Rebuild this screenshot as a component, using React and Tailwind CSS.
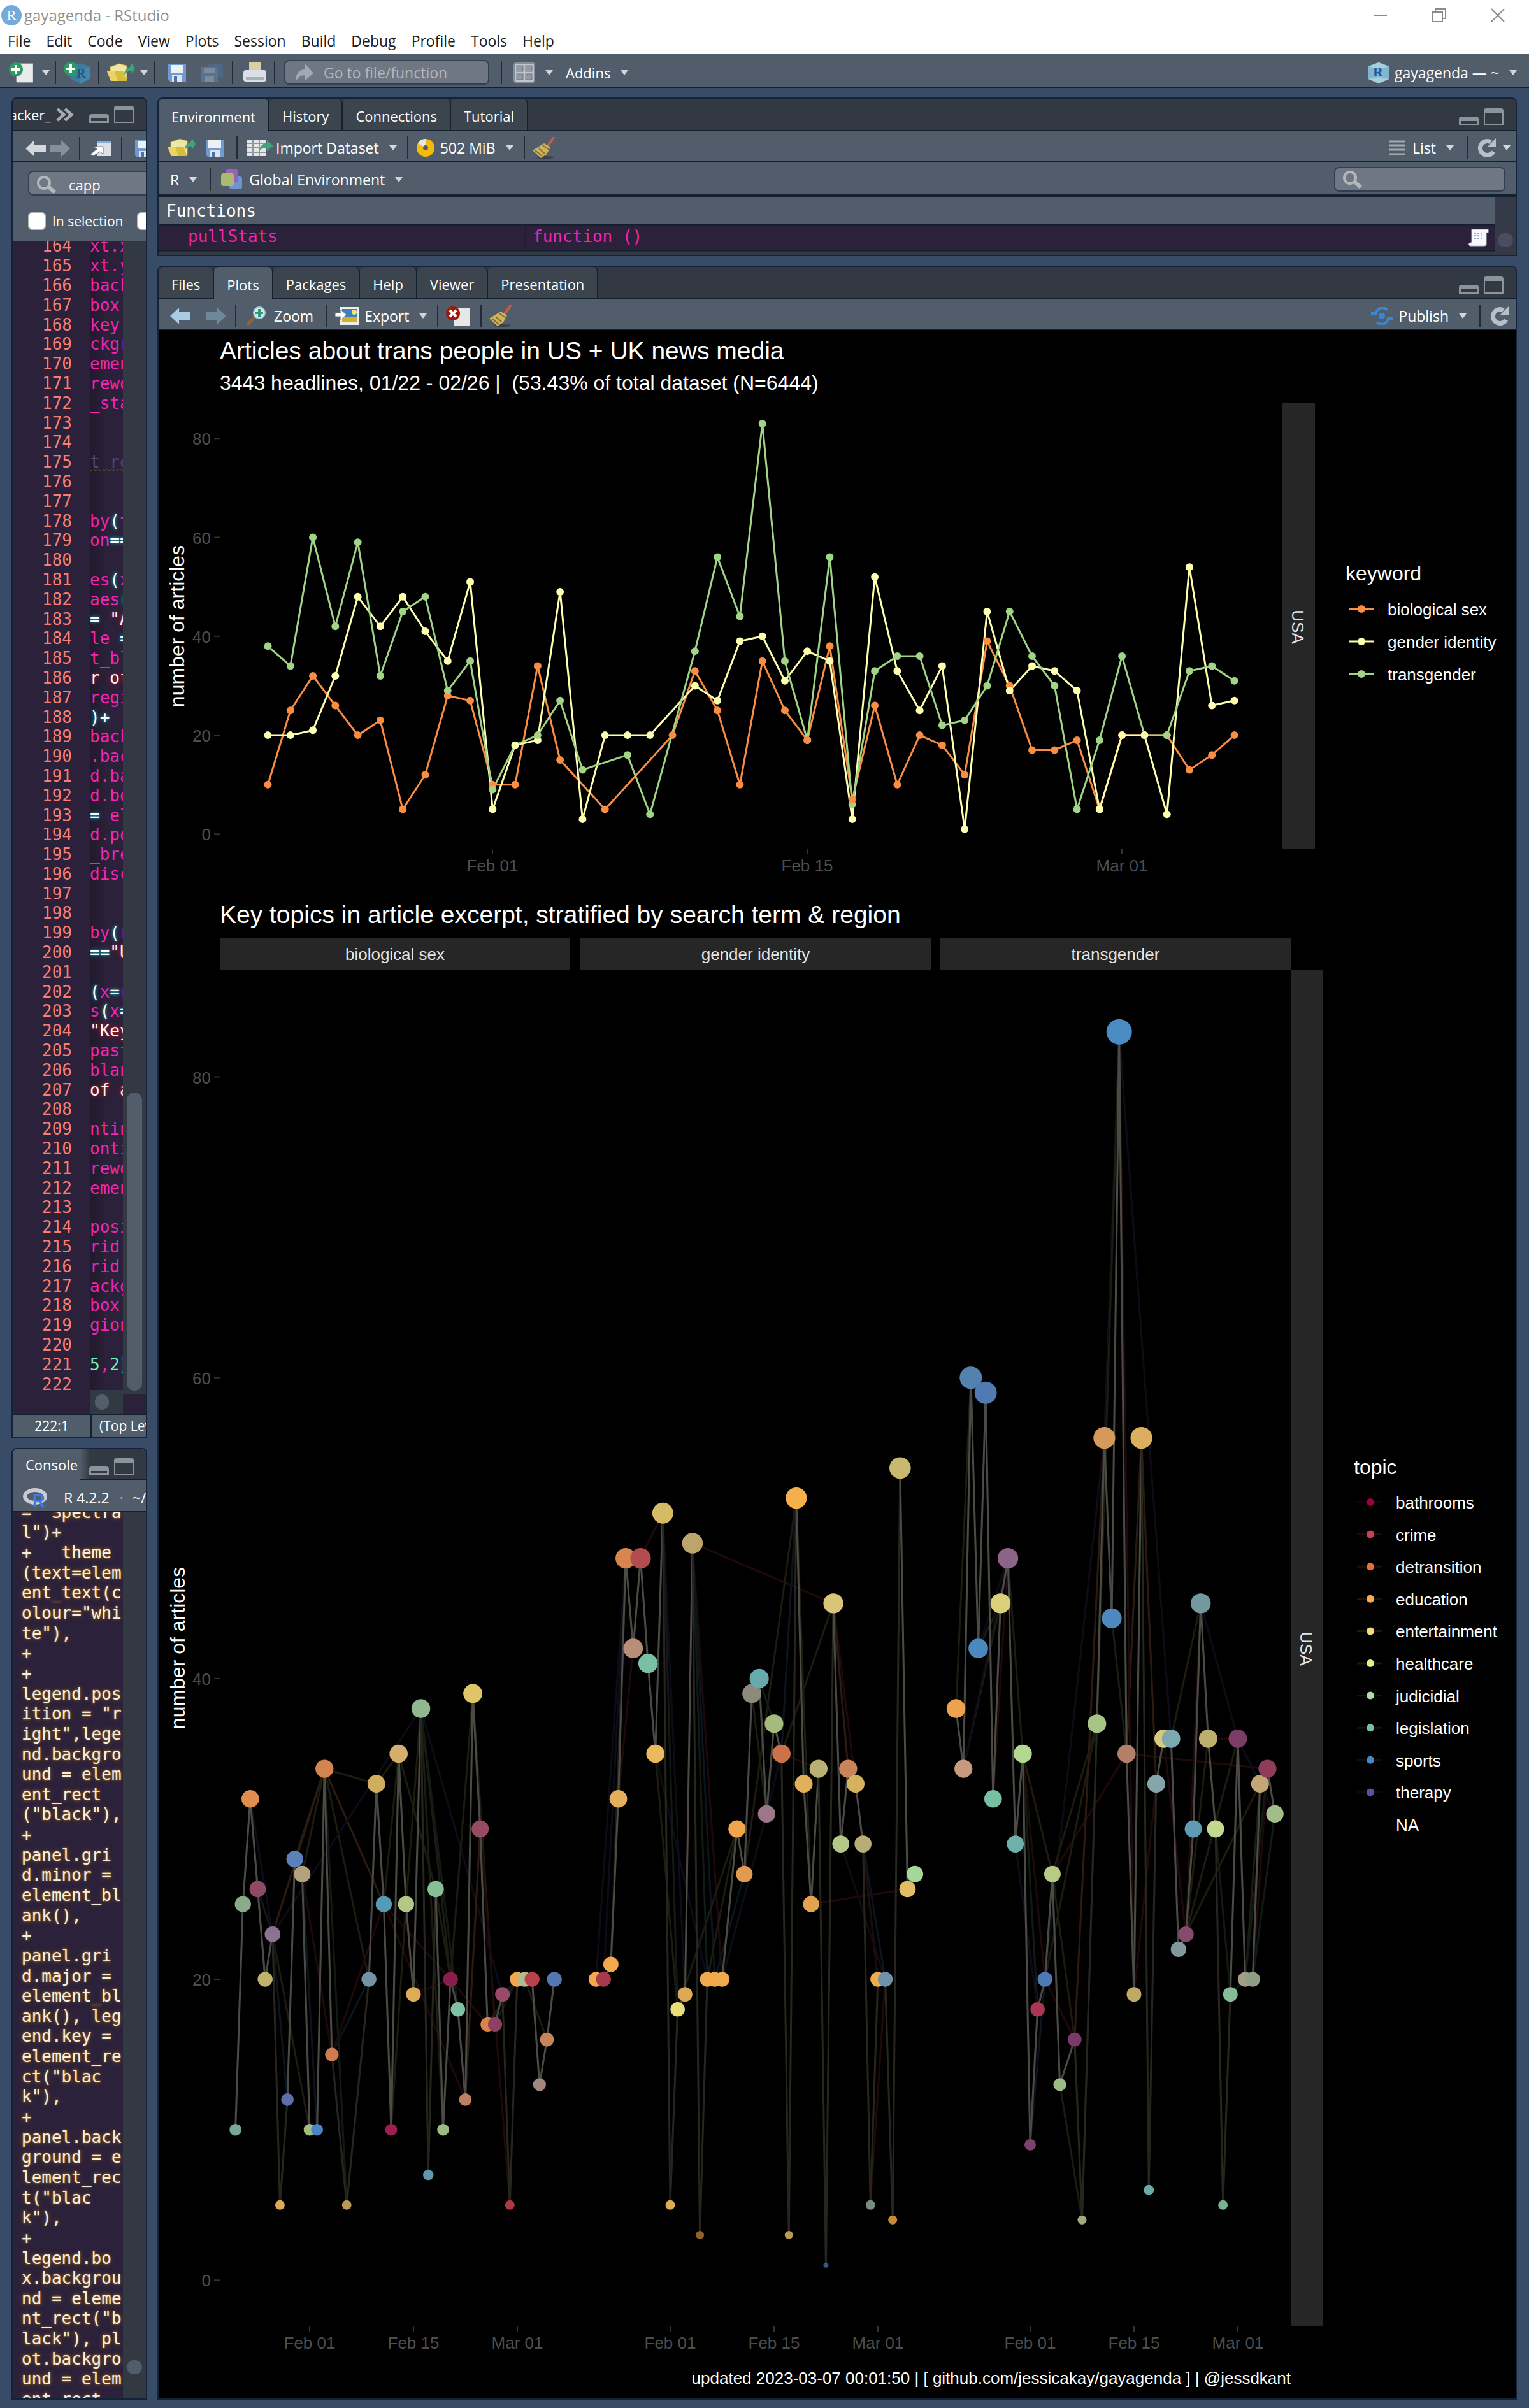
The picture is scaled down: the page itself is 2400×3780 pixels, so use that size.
import { clsx } from "clsx";

/* ---------- data ---------- */

const MENUS = ["File", "Edit", "Code", "View", "Plots", "Session", "Build", "Debug", "Profile", "Tools", "Help"];

// visible slice of the editor; "str" lines sit inside a string, "com" lines are comments
const CODE = [
  ["xt.x"], ["xt.y"], ["back"], ["box."], ["key."], ["ckgr"], ["emen"], ["rewo"], ["_sta"], [""], [""],
  ["t re", "com"], [""], [""], ["by(t"], ["on=="], [""], ["es(x"], ["aes("], ['= "A'], ["le ="], ["t_bl"],
  ["r of", "str"], ["regi"], [")+"], ["back"], [".bac"], ["d.ba"], ["d.bo"], ["= el"], ["d.po"], ["_bre"],
  ["disc"], [""], [""], ["by(r"], ['=="U'], [""], ["(x=r"], ["s(x="], ['"Key', "str"], ["past"], ["blan"],
  ["of a", "str"], [""], ["ntin"], ["onti"], ["rewo"], ["emen"], [""], ["posi"], ["rid."], ["rid."], ["ackg"],
  ["box."], ["gion"], [""], ["5,2)"], [""],
];

const CONSOLE = [
  '= "Spectra', 'l")+', "+   theme", "(text=elem", "ent_text(c", 'olour="whi', 'te"),', "+", "+", "legend.pos",
  'ition = "r', 'ight",lege', "nd.backgro", "und = elem", "ent_rect", '("black"),', "+", "panel.gri", "d.minor =",
  "element_bl", "ank(),", "+", "panel.gri", "d.major =", "element_bl", "ank(), leg", "end.key =", "element_re",
  'ct("blac', 'k"),', "+", "panel.back", "ground = e", "lement_rec", 't("blac', 'k"),', "+", "legend.bo",
  "x.backgrou", "nd = eleme", 'nt_rect("b', 'lack"), pl', "ot.backgro", "und = elem", "ent_rect",
];

const _ = null;
// one value per day, starting Jan 22
const BIO = [10, 25, 32, 26, 20, 23, 5, 12, 28, 27, 10, 10, 34, 15, _, 5, _, _, 20, 33, 25, 10, 35, 25, 19, 38, 7, 26, 10, 20, 18, 12, 39, 30, 17, 17, 19, 5, 20, 20, 20, 13, 16, 20];
const GENDER = [20, 20, 21, 32, 48, 42, 48, 41, 35, 51, 5, 18, 19, 49, 3, 20, 20, 20, _, 30, 27, 39, 40, 31, 37, 35, 3, 52, 33, 25, 34, 1, 45, 29, 34, 33, 29, 5, 20, 20, 4, 54, 26, 27];
const TRANS = [38, 34, 60, 42, 59, 32, 45, 48, 29, 35, 9, 18, 20, 27, 13, _, 16, 4, _, 37, 56, 44, 83, 35, 19, 56, 6, 33, 36, 36, 22, 23, 30, 45, 36, 30, 5, 19, 36, 20, 20, 33, 34, 31];

const SERIES = [
  { name: "biological sex", color: "#f98d43", values: BIO },
  { name: "gender identity", color: "#ffffb0", values: GENDER },
  { name: "transgender", color: "#a1d486", values: TRANS },
];

// series whose dot is painted last on days where dots overlap
const ON_TOP = { 8: 2, 10: 2, 12: 2, 24: 0, 26: 0, 40: 2 };

const BIO_COLORS = "74a99b 8ba98b e08e4f 8f4a68 c0b16c 8b7393 dba95a 5c6fa9 5a82b8 b5a27d a1bb80 4a86c6 d38450 cf7a4f - b89757 - - 7592a5 cfae60 559bb7 9c1f50 d5ae6c b3c787 dfab55 90b890 6298ae 86be95 9cbb84 8a1c4e 7fc0a2 bd8162 dfc468 974a62 dc834b 8d4063 9a4a66 a93a44 f3a94b b4ba90 b9414c a2877f c7835c 5377b2".split(" ");
const GENDER_COLORS = "f3a94b a8384c f3a94b e2b05a d78650 b98d78 b34d4d 7bc0a4 ebba5e d7bb64 e0ab55 e9e078 dea957 bda36c 8f622b f1a94d f3a94b f1a94d - f1a64c e09b51 8b8a7c 67aaae 9d7789 a5bb7e cc724a b79a54 f4b04a e0b05a e5a34f bbb073 2c5e8d d9c578 b5c787 c98559 d5b260 b8ad77 788c80 efac4f 6f91aa c98a35 c8b96f e2bd63 a6d79a".split(" ");
const TRANS_COLORS = "efa24c c79a80 5482ae 4a88c0 527ab2 78bfa3 d9d07c 8b6488 6fb0aa b5d890 7d426c ab3552 4d7ab4 b7cb86 9bbd84 - 7a3a6c a7a87c - a7c484 d6995c 4e89bd 4a8bc4 b47f68 bfa964 dcae60 67ada6 84a6aa d9c97c 7ca8b0 81979a 874a6b 5f9cb3 74989f bdae6e c2da8d 79b193 84bd98 7d3c66 a39d85 8f9e85 c2a673 913b5a a2bd8a".split(" ");

const INK = { o: "#1c1c10", r: "#1f0a0b", p: "#0e0c18", b: "#0a151f", g: "#101b16", n: "#2c1b11" };

// faint per-topic links between days: [from, to, ink]
const BIO_LINKS = [
  [12, 19, "o"], [5, 10, "o"], [3, 5, "g"], [2, 5, "p"], [12, 20, "n"], [12, 18, "o"], [5, 12, "n"], [9, 12, "o"], [8, 12, "n"],
  [5, 25, "p"], [25, 36, "p"], [22, 27, "o"], [19, 22, "o"], [20, 29, "r"], [29, 34, "r"], [20, 31, "r"], [12, 15, "g"],
  [9, 13, "r"], [13, 18, "b"], [13, 20, "r"], [25, 28, "o"], [25, 29, "o"], [25, 30, "g"], [32, 35, "o"], [33, 37, "r"],
  [35, 38, "g"], [36, 38, "b"], [27, 29, "o"], [39, 42, "o"], [5, 7, "b"], [9, 11, "b"], [20, 22, "o"], [23, 25, "o"],
  [29, 32, "o"], [31, 33, "n"], [34, 38, "o"], [2, 4, "g"], [24, 29, "r"], [21, 23, "o"],
];
const GENDER_LINKS = [
  [6, 9, "r"], [13, 32, "r"], [25, 27, "b"], [20, 27, "o"], [25, 32, "o"], [32, 35, "r"], [32, 34, "n"], [13, 15, "g"],
  [13, 17, "r"], [8, 15, "p"], [8, 11, "o"], [9, 12, "p"], [13, 16, "b"], [11, 19, "o"], [15, 19, "o"], [17, 23, "p"], [16, 20, "b"],
  [29, 42, "r"], [33, 39, "p"], [36, 39, "b"], [36, 38, "o"], [1, 4, "p"], [2, 4, "o"], [3, 5, "r"], [23, 25, "p"], [25, 30, "r"],
  [27, 29, "o"], [35, 38, "r"], [37, 39, "r"], [9, 11, "g"], [22, 24, "g"], [21, 23, "o"], [0, 4, "p"],
];
const TRANS_LINKS = [
  [0, 2, "o"], [1, 6, "o"], [3, 6, "o"], [1, 7, "p"], [3, 7, "p"], [7, 9, "o"], [9, 13, "o"], [9, 11, "g"], [9, 12, "r"],
  [8, 11, "p"], [12, 20, "p"], [20, 22, "p"], [22, 29, "p"], [12, 16, "r"], [14, 17, "o"], [16, 17, "b"], [13, 19, "o"],
  [13, 16, "o"], [13, 23, "r"], [23, 42, "r"], [24, 27, "r"], [21, 23, "o"], [25, 27, "n"], [23, 25, "n"], [19, 22, "o"],
  [29, 33, "o"], [33, 38, "p"], [31, 34, "o"], [31, 38, "o"], [31, 41, "o"], [34, 38, "r"], [38, 43, "p"], [35, 37, "g"],
  [39, 41, "o"], [39, 42, "g"], [40, 43, "g"], [40, 42, "r"], [22, 24, "r"], [28, 31, "r"], [31, 33, "r"], [17, 19, "g"],
  [5, 7, "r"], [10, 12, "b"], [12, 19, "o"], [16, 20, "n"], [37, 39, "g"],
];

const FACETS = [
  { name: "biological sex", x: 345, feb: 486, values: BIO, colors: BIO_COLORS, links: BIO_LINKS },
  { name: "gender identity", x: 911, feb: 1052, values: GENDER, colors: GENDER_COLORS, links: GENDER_LINKS },
  { name: "transgender", x: 1476, feb: 1617, values: TRANS, colors: TRANS_COLORS, links: TRANS_LINKS },
];

const TOPICS = [
  ["bathrooms", "#9e0142", "#1a0009"], ["crime", "#c8404b", "#1a0a0b"], ["detransition", "#e87030", "#231009"],
  ["education", "#f7ad4b", "#1d150a"], ["entertainment", "#f5dc78", "#1b190e"], ["healthcare", "#e8f08a", "#191a0e"],
  ["judicidial", "#abdda4", "#121811"], ["legislation", "#77bfa5", "#0c1612"], ["sports", "#4a86c0", "#08111a"],
  ["therapy", "#5e4fa2", "#0b0913"], ["NA", null, null],
];

/* ---------- icons ---------- */

const Icon = ({ w, h, className, children }) => (
  <svg width={w} height={h} viewBox={`0 0 ${w} ${h}`} className={clsx("shrink-0", className)} aria-hidden="true">
    {children}
  </svg>
);

const Caret = ({ className }) => (
  <Icon w={12} h={8} className={className}><path d="M0 0h12L6 8z" fill="#d3d6d9" /></Icon>
);

const Sep = ({ className }) => <span className={clsx("h-9 w-0.5 shrink-0 bg-[#222b35]", className)} />;

const PlusBadge = () => (
  <>
    <circle cx="11" cy="12" r="11" fill="#2d9a5f" />
    <path d="M11 5v14M4 12h14" stroke="#fff" strokeWidth="4" />
  </>
);

const NewFileIcon = (p) => (
  <Icon w={38} h={34} {...p}><path d="M12 3h26v29H12z" fill="#e9eaea" stroke="#bfc4c8" /><PlusBadge /></Icon>
);

const NewProjectIcon = (p) => (
  <Icon w={42} h={36} {...p}>
    <path d="M26 3l16 6v18l-16 9-16-9V9z" fill="#3b7ba0" />
    <path d="M26 14l16-5v18l-16 9z" fill="#4587aa" />
    <text x="20" y="26" fontSize="20" fontFamily="Liberation Serif, serif" fontWeight="bold" fill="#1f568b">R</text>
    <PlusBadge />
  </Icon>
);

const FolderIcon = (p) => (
  <Icon w={44} h={30} {...p}>
    <path d="M5 6l14-5 12 3v22H5z" fill="#f0e6a4" stroke="#b7a341" />
    <path d="M0 13h25l6 15H6z" fill="#d9bd3a" />
    <path d="M6 28L0 13h12l5 15z" fill="#ead468" />
    <path d="M31 13l8-12v0l5 8-5 8v-4c-6-1-10 2-12 6 0-8 4-13 12-13" fill="#3fa27a" />
  </Icon>
);

const SaveIcon = (p) => (
  <Icon w={28} h={28} {...p}>
    <path d="M0 1h28v27H3l-3-3z" fill="#6f9bd0" />
    <path d="M4 2h20v12H4z" fill="#eef1f4" />
    <path d="M6 18h16v10H6z" fill="#dfe4ea" />
    <path d="M9 20h5v8H9z" fill="#4a74a8" />
  </Icon>
);

const SaveAllIcon = (p) => (
  <Icon w={34} h={30} {...p}>
    <path d="M10 1h24v21H10z" fill="#4e6883" />
    <path d="M0 6h26v24H0z" fill="#567391" />
    <path d="M4 7h18v9H4zM6 21h14v8H6z" fill="#7b8b9b" />
  </Icon>
);

const PrintIcon = (p) => (
  <Icon w={36} h={32} {...p}>
    <path d="M9 0h18v16H9z" fill="#d9cfa4" />
    <rect y="12" width="36" height="18" rx="4" fill="#dcdfe6" />
    <path d="M4 23h28v4H4z" fill="#a9afbb" />
  </Icon>
);

const GotoIcon = (p) => (
  <Icon w={28} h={28} {...p}><path d="M0 28C0 15 6 9 15 9V0l13 15-13 11v-8C8 18 4 21 0 28z" fill="#a3a9b4" /></Icon>
);

const GridIcon = (p) => (
  <Icon w={34} h={32} {...p}>
    <rect x="1" y="1" width="32" height="30" rx="3" fill="#c1c5ca" stroke="#848d98" strokeWidth="2" />
    {[[5, 5], [19, 5], [5, 18], [19, 18]].map(([x, y]) => (
      <rect key={`${x}-${y}`} x={x} y={y} width="10" height="9" fill="#939ba5" stroke="#6c7580" />
    ))}
  </Icon>
);

const CubeIcon = (p) => (
  <Icon w={34} h={34} {...p}>
    <path d="M17 1l16 6v20l-16 7-16-7V7z" fill="#7fb6d0" />
    <path d="M17 1l16 6-16 5L1 7zM17 24l16 3-16 7-16-7z" fill="#a3cfe0" />
    <text x="8" y="23" fontSize="22" fontFamily="Liberation Serif, serif" fontWeight="bold" fill="#24589c">R</text>
  </Icon>
);

const MinimizePane = (p) => (
  <Icon w={31} h={14} {...p}>
    <path d="M0 14V4q0-4 4-4h23q4 0 4 4v10z" fill="#8b939b" /><path d="M3 7h25v4H3z" fill="#323942" />
  </Icon>
);

const MaximizePane = (p) => (
  <Icon w={31} h={27} {...p}>
    <path d="M0 27V4q0-4 4-4h23q4 0 4 4v23z" fill="#8b939b" /><path d="M2 7h27v18H2z" fill="#323942" />
  </Icon>
);

const ArrowIcon = ({ right, color, ...p }) => (
  <Icon w={32} h={26} {...p}>
    <path d={right ? "M32 13L18 0v7H0v12h18v7z" : "M0 13L14 0v7h18v12H14v7z"} fill={color} />
  </Icon>
);

const PopoutIcon = (p) => (
  <Icon w={32} h={24} {...p}>
    <path d="M10 0h20l2 2v22H10z" fill="#dde0e4" />
    <path d="M10 0h20l2 3H10z" fill="#86abd6" />
    <path d="M0 21L10 13 5 9h15v12l-5-4-11 7z" fill="#fff" stroke="#6d7883" />
  </Icon>
);

const SearchIcon = (p) => (
  <Icon w={30} h={28} {...p}>
    <circle cx="11" cy="11" r="9" fill="none" stroke="#b4b8bc" strokeWidth="4" />
    <path d="M18 17l10 9" stroke="#b4b8bc" strokeWidth="6" />
  </Icon>
);

const ImportIcon = (p) => (
  <Icon w={42} h={28} {...p}>
    <path d="M0 1h30v26H0z" fill="#e4e6e8" />
    <path d="M0 7h30M0 14h30M0 21h30M10 1v26M20 1v26" stroke="#8f979f" strokeWidth="2" />
    <path d="M20 18c2-8 6-11 12-11V2l10 9-10 8v-5c-5-1-8 1-12 4z" fill="#3fa27a" />
  </Icon>
);

const PieIcon = (p) => (
  <Icon w={30} h={30} {...p}>
    <circle cx="15" cy="15" r="14" fill="#f5bb0c" />
    <path d="M15 15L3 8A14 14 0 0 1 15 1z" fill="#e6e6e6" />
    <circle cx="15" cy="15" r="4" fill="#525d6b" />
  </Icon>
);

const BroomIcon = (p) => (
  <Icon w={36} h={34} {...p}>
    <ellipse cx="20" cy="32" rx="14" ry="2" fill="#39424d" />
    <path d="M33 1L23 15" stroke="#c45a45" strokeWidth="4" strokeLinecap="round" />
    <path d="M18 10l10 6-6 11-9 6L0 21z" fill="#cdb35e" />
    <path d="M16 13l10 7M4 21l11 9M10 18l9 8" stroke="#8a6a2c" strokeWidth="2" />
  </Icon>
);

const ListIcon = (p) => (
  <Icon w={24} h={24} {...p}><path d="M0 2h24M0 8h24M0 15h24M0 22h24" stroke="#a3aab0" strokeWidth="3" /></Icon>
);

const RefreshIcon = (p) => (
  <Icon w={31} h={32} {...p}>
    <path d="M26 22A11 11 0 1 1 22 7" fill="none" stroke="#b7bfca" strokeWidth="7" />
    <path d="M30 1v14H16z" fill="#b7bfca" />
  </Icon>
);

const EnvIcon = (p) => (
  <Icon w={34} h={31} {...p}>
    <rect x="13" y="11" width="20" height="20" rx="4" fill="#7193d2" />
    <rect x="7" y="0" width="20" height="20" rx="4" fill="#9a62b5" />
    <rect x="0" y="6" width="20" height="20" rx="4" fill="#a9bb70" />
  </Icon>
);

const ZoomIcon = (p) => (
  <Icon w={31} h={30} {...p}>
    <path d="M13 17L2 28" stroke="#96602f" strokeWidth="5" strokeLinecap="round" />
    <circle cx="20" cy="10" r="9" fill="#d3e9f0" stroke="#a5c9dc" strokeWidth="2" />
    <path d="M20 4v12M14 10h12" stroke="#2f9a72" strokeWidth="4" />
  </Icon>
);

const ExportIcon = (p) => (
  <Icon w={38} h={28} {...p}>
    <path d="M8 0h30v28H8z" fill="#eceded" />
    <path d="M11 3h24v12H11z" fill="#3d7fc4" />
    <path d="M11 15h24v9H11z" fill="#d4b227" />
    <circle cx="30" cy="8" r="4" fill="#f4e37a" />
    <path d="M0 9h9V4l9 8-9 8v-5H0z" fill="#fff" stroke="#6d7883" />
  </Icon>
);

const DeletePlotIcon = (p) => (
  <Icon w={38} h={31} {...p}>
    <path d="M13 3h25v28H13z" fill="#e6e7e8" />
    <circle cx="11" cy="11" r="11" fill="#9c1a0c" />
    <path d="M6 6l10 10M16 6L6 16" stroke="#fff" strokeWidth="4" />
  </Icon>
);

const PublishIcon = (p) => (
  <Icon w={35} h={28} {...p}>
    <circle cx="17" cy="14" r="5" fill="#3a86d0" />
    <path d="M26 4c-9-6-17-1-18 6H0M9 24c9 6 17 1 18-6h8" fill="none" stroke="#3a86d0" strokeWidth="4" />
  </Icon>
);

const ScriptIcon = () => (
  <Icon w={32} h={28}>
    <path d="M5 1h26v5h-3v18q0 3-3 3H2q-3-3 0-5h3z" fill="#f7f8fc" stroke="#b9bfd8" />
    <path d="M9 7h14M9 11h14M9 15h14" stroke="#9aa6d6" strokeWidth="2" strokeDasharray="3 2" />
  </Icon>
);

const RLogo = (p) => (
  <Icon w={40} h={30} {...p}>
    <ellipse cx="19" cy="13" rx="16" ry="10" fill="none" stroke="#c9ccd2" strokeWidth="6" />
    <text x="15" y="29" fontSize="27" fontFamily="Liberation Sans, sans-serif" fontWeight="bold" fill="#3d7ae8">R</text>
  </Icon>
);

/* ---------- panes ---------- */

const Pane = ({ className, children }) => (
  <section className={clsx("flex flex-col overflow-hidden rounded-t-lg border-2 border-[#13233a] bg-[#525d6b]", className)}>
    {children}
  </section>
);

const Bar = ({ className, children }) => (
  <div className={clsx("flex h-12 shrink-0 items-center overflow-hidden border-b-2 border-[#12202f] whitespace-nowrap", className)}>
    {children}
  </div>
);

const Tabs = ({ items, active }) => (
  <div className="flex h-[51px] shrink-0 items-stretch bg-[#323942]" role="tablist">
    {items.map((t) => (
      <button
        key={t}
        role="tab"
        aria-selected={t === active}
        className={clsx(
          "rounded-t-lg border-r-2 border-[#12202f] px-5 pt-1 text-[22px] leading-6",
          t === active ? "bg-[#525d6b]" : "border-b-2 bg-[#3c444d]"
        )}
      >
        {t}
      </button>
    ))}
    <div className="flex flex-1 items-end justify-end gap-2 border-b-2 border-[#12202f] pr-[19px] pb-[7px]">
      <button aria-label="Minimize pane"><MinimizePane /></button>
      <button aria-label="Maximize pane"><MaximizePane /></button>
    </div>
  </div>
);

const ToolButton = ({ icon, label, caret, gap = "ml-2", className }) => (
  <button className={clsx("flex shrink-0 items-center", className)}>
    {icon}
    {label && <span className={icon ? gap : ""}>{label}</span>}
    {caret && <Caret className="ml-4" />}
  </button>
);

function TitleBar() {
  return (
    <header className="bg-white">
      <div className="flex h-12 items-center pl-0.5 pr-[38px]">
        <span className="flex size-8 items-center justify-center rounded-full bg-[#75aadb] font-['Liberation_Serif',serif] text-[22px] text-white">R</span>
        <h1 className="ml-1 text-[24px] text-[#8f8f8f]">gayagenda - RStudio</h1>
        <div className="ml-auto flex items-center gap-[70px]">
          <button aria-label="Minimize"><Icon w={22} h={22}><path d="M0 11h21" stroke="#8a8a8a" strokeWidth="2" /></Icon></button>
          <button aria-label="Restore">
            <Icon w={22} h={22}><path d="M1 6h15v15H1zM5 6V1h16v15h-5" fill="none" stroke="#8a8a8a" strokeWidth="2" /></Icon>
          </button>
          <button aria-label="Close"><Icon w={22} h={22}><path d="M1 1l20 20M21 1L1 21" stroke="#8a8a8a" strokeWidth="2" /></Icon></button>
        </div>
      </div>
      <nav className="flex h-[37px] items-center gap-6 pb-1.5 pl-3 text-[23px] text-[#1d1d1d]">
        {MENUS.map((m) => <button key={m}>{m}</button>)}
      </nav>
    </header>
  );
}

function MainToolbar() {
  return (
    <div className="flex h-[53px] items-center border-b-2 border-[#12202f] bg-[#525d6b] pt-1.5 pr-[19px] pl-3.5 whitespace-nowrap">
      <ToolButton icon={<NewFileIcon />} />
      <Caret className="ml-3.5" />
      <Sep className="ml-2" />
      <ToolButton icon={<NewProjectIcon />} className="ml-3" />
      <Sep className="ml-3" />
      <ToolButton icon={<FolderIcon />} className="ml-3" />
      <Caret className="ml-2" />
      <Sep className="ml-2.5" />
      <ToolButton icon={<SaveIcon />} className="ml-5" />
      <ToolButton icon={<SaveAllIcon />} className="ml-6" />
      <Sep className="ml-3.5" />
      <ToolButton icon={<PrintIcon />} className="ml-4" />
      <Sep className="ml-3" />
      <div className="ml-3.5 flex h-[39px] w-[322px] items-center rounded-lg border-2 border-[#323f52] bg-[#6e7783] pl-4">
        <GotoIcon />
        <input aria-label="Go to file/function" placeholder="Go to file/function" className="ml-4 w-60 bg-transparent text-[23px] placeholder-[#b4b8bd]" />
      </div>
      <Sep className="ml-[18px]" />
      <ToolButton icon={<GridIcon />} caret className="ml-[18px]" />
      <ToolButton label="Addins" caret className="ml-5" />
      <ToolButton icon={<CubeIcon />} label="gayagenda — ~" caret className="ml-auto text-[23px]" />
    </div>
  );
}

const TOKEN_CLASS = {
  op: "text-[#fdfdfd] [text-shadow:0_0_4px_#03edf9aa,0_0_10px_#03edf966]",
  str: "text-[#fff5f6] [text-shadow:0_0_4px_#fc1f2c88,0_0_10px_#fc1f2c88]",
  num: "text-[#72f1b8]",
  com: "text-[#4c4872] underline decoration-[#6b5212] decoration-wavy decoration-1",
  id: "text-[#f323b4]",
};

function tokenize(text, kind) {
  if (kind) return [[text, kind]];
  return (text.match(/".*|[()=+]+|\d+|[^"()=+\d]+/g) || []).map((t) => {
    if (t[0] === '"') return [t, "str"];
    if (/[()=+]/.test(t)) return [t, "op"];
    if (/\d/.test(t)) return [t, "num"];
    return [t, "id"];
  });
}

function SourcePane() {
  return (
    <Pane>
      <Bar className="h-[51px]! bg-[#323942] pr-[19px]">
        <button className="w-[60px] overflow-hidden text-[22px]">
          <span className="float-right">acker_</span>
        </button>
        <Icon w={28} h={22} className="ml-2">
          <path d="M2 2l10 9-10 9M14 2l10 9-10 9" fill="none" stroke="#a3a9af" strokeWidth="5" />
        </Icon>
        <button aria-label="Minimize pane" className="mt-3 ml-auto"><MinimizePane /></button>
        <button aria-label="Maximize pane" className="ml-2"><MaximizePane /></button>
      </Bar>
      <Bar className="pt-2 pl-5">
        <ArrowIcon color="#d5d8da" />
        <ArrowIcon right color="#868e97" className="ml-1.5" />
        <Sep className="ml-3.5" />
        <PopoutIcon className="ml-4" />
        <Sep className="ml-4" />
        <SaveIcon className="ml-5" />
      </Bar>
      <div className="flex h-[124px] shrink-0 flex-col overflow-hidden pt-3.5 pl-6">
        <div className="flex h-[39px] w-80 shrink-0 items-center rounded-lg border-2 border-[#323f52] bg-[#6e7783] pt-1 pl-3">
          <SearchIcon />
          <input aria-label="Find" defaultValue="capp" className="ml-5 w-28 bg-transparent text-[22px]" />
        </div>
        <div className="mt-6 flex w-96 items-center gap-2.5 text-[21px] leading-8">
          <input id="in-selection" type="checkbox" className="size-7 shrink-0 appearance-none rounded-md border-2 border-[#b5b5b5] bg-white" />
          <label htmlFor="in-selection">In selection</label>
          <input aria-label="Match case" type="checkbox" className="ml-3 size-7 shrink-0 appearance-none rounded-md border-2 border-[#b5b5b5] bg-white" />
        </div>
      </div>

      {/* Editor: gutter, text, scrollbars */}
      <div className="flex h-[1841px] overflow-hidden bg-[#2b213a] font-['DejaVu_Sans_Mono',monospace] text-[26px]">
        <ol className="-mt-[7px] flex h-[1817px] w-[121px] shrink-0 flex-col pl-[46px] text-[#f97e72]">
          {CODE.map((line, i) => <li key={i} className="flex flex-1 items-center leading-none">{164 + i}</li>)}
        </ol>
        <div className="flex w-[52px] shrink-0 flex-col">
          <div className="h-[1804px] overflow-hidden bg-linear-to-r from-[#21192d] to-[#2b213a] to-50%">
            <div className="-mt-[7px] flex h-[1817px] flex-col">
              {CODE.map(([text, kind], i) => (
                <pre key={i} className="flex flex-1 items-center font-['DejaVu_Sans_Mono',monospace] leading-none">
                  {tokenize(text, kind).map(([t, k], j) => <span key={j} className={TOKEN_CLASS[k]}>{t}</span>)}
                </pre>
              ))}
            </div>
          </div>
          <div className="flex flex-1 items-center bg-[#323942] pl-2">
            <span className="h-6 w-[22px] rounded-full bg-[#525d6b]" />
          </div>
        </div>
        <div className="flex h-[1811px] flex-1 flex-col justify-end bg-[#323942] px-1.5 pb-1.5">
          <span className="h-[468px] rounded-full bg-[#525d6b]" />
        </div>
      </div>

      <div className="flex h-9 items-center overflow-hidden border-t-2 border-[#12202f] text-[21px] whitespace-nowrap">
        <button className="h-full w-[124px] shrink-0 border-r-2 border-[#12202f]">222:1</button>
        <button className="h-full shrink-0 pl-3">(Top Level)</button>
      </div>
    </Pane>
  );
}

function ConsolePane() {
  return (
    <Pane className="min-h-0 flex-1 basis-0">
      <div className="flex h-12 shrink-0 items-center bg-[#525d6b]">
        <button className="h-full w-[106px] pl-5 text-left text-[22px]">Console</button>
        <div className="flex h-full flex-1 items-end justify-end gap-2 border-b-2 border-[#12202f] bg-linear-to-r from-[#525d6b] to-[#323942] to-15% pr-[19px] pb-[5px]">
          <button aria-label="Minimize pane"><MinimizePane /></button>
          <button aria-label="Maximize pane"><MaximizePane /></button>
        </div>
      </div>
      <Bar className="h-[51px]! pt-1.5 pl-4 text-[23px]">
        <RLogo />
        <span className="ml-6">R 4.2.2</span>
        <span className="ml-4 text-[#a9afb6]">·</span>
        <span className="ml-3.5">~/</span>
      </Bar>
      <div className="flex min-h-0 flex-1 overflow-hidden bg-[#2b213a] font-['DejaVu_Sans_Mono',monospace] text-[26px]">
        <div className="-mt-4 flex h-[1424px] w-[173px] shrink-0 flex-col overflow-hidden pl-3.5 text-[#f4eee4] [text-shadow:0_0_3px_#f39f05aa,0_0_9px_#f39f0566]">
          {CONSOLE.map((line, i) => (
            <pre key={i} className="flex flex-1 items-center font-['DejaVu_Sans_Mono',monospace] leading-none">{line}</pre>
          ))}
        </div>
        <div className="flex flex-1 flex-col justify-end bg-[#323942] px-1.5 pb-[38px]">
          <span className="h-[22px] rounded-full bg-[#525d6b]" />
        </div>
      </div>
    </Pane>
  );
}

function EnvironmentPane() {
  return (
    <Pane>
      <Tabs items={["Environment", "History", "Connections", "Tutorial"]} active="Environment" />
      <Bar className="pt-1.5 pr-2 pl-3.5 text-[23px]">
        <ToolButton icon={<FolderIcon />} />
        <ToolButton icon={<SaveIcon />} className="ml-4" />
        <Sep className="ml-5" />
        <ToolButton icon={<ImportIcon />} label="Import Dataset" caret gap="ml-1" className="ml-3.5" />
        <Sep className="ml-4" />
        <ToolButton icon={<PieIcon />} label="502 MiB" caret className="ml-3" />
        <Sep className="ml-4" />
        <ToolButton icon={<BroomIcon />} className="ml-3" />
        <ToolButton icon={<ListIcon />} label="List" caret gap="ml-3" className="ml-auto" />
        <Sep className="ml-5" />
        <ToolButton icon={<RefreshIcon />} className="ml-3.5" />
        <Caret className="ml-2.5" />
      </Bar>
      <Bar className="h-[55px]! border-b-4! pt-1 pr-4 pl-[18px] text-[23px]">
        <ToolButton label="R" caret />
        <Sep className="ml-5" />
        <ToolButton icon={<EnvIcon />} label="Global Environment" caret gap="ml-2.5" className="ml-4" />
        <div className="ml-auto flex h-[39px] w-[269px] items-center rounded-lg border-2 border-[#323f52] bg-[#6e7783] pl-3">
          <SearchIcon />
          <input aria-label="Search environment" className="ml-2 w-48 bg-transparent text-[22px]" />
        </div>
      </Bar>
      <div className="flex border-b-4 border-[#323942] font-['DejaVu_Sans_Mono',monospace] text-[26px]">
        <table className="flex-1 border-collapse text-left">
          <thead>
            <tr className="h-11 border-b-2 border-[#12202f]">
              <th colSpan={3} className="pl-3 font-normal">Functions</th>
            </tr>
          </thead>
          <tbody>
            <tr className="h-10 border-b-2 border-[#12202f] bg-[#2b213a] text-[#f323b4]">
              <td className="w-[576px] border-r-2 border-[#221a2e] pb-1 pl-[46px]">pullStats</td>
              <td className="pb-1 pl-2.5">function ()</td>
              <td className="w-[42px]"><button aria-label="Show function source" className="flex"><ScriptIcon /></button></td>
            </tr>
            <tr className="h-[3px] bg-[#2b213a]"><td colSpan={3} /></tr>
          </tbody>
        </table>
        <div className="flex w-8 flex-col items-center justify-end bg-[#343a48] pb-2">
          <span className="h-[22px] w-6 rounded-full bg-[#4a4d61]" />
        </div>
      </div>
    </Pane>
  );
}

/* ---------- plots ---------- */

const dayX = (d) => 420.5 + d * 35.28;
const lineY = (v) => 1309.4 - v * 7.764;
const bubbleY = (v) => 3579.3 - v * 23.61;
const bubbleR = (v) => 4 + 16 * Math.sqrt((v - 1) / 82);

const present = (values) => values.map((v, d) => [d, v]).filter(([, v]) => v !== null);

const AxisY = ({ scale }) =>
  [0, 20, 40, 60, 80].map((v) => (
    <g key={v}>
      <path d={`M336 ${scale(v)}H345`} stroke="#333" strokeWidth="2" />
      <text x="331" y={scale(v) + 10} textAnchor="end" fontSize="26" fill="#4d4d4d">{v}</text>
    </g>
  ));

const AxisX = ({ ticks, y }) =>
  ticks.map(([x, label]) => (
    <g key={x}>
      <path d={`M${x} ${y}v8`} stroke="#333" strokeWidth="2" />
      <text x={x} y={y + 35} textAnchor="middle" fontSize="26" fill="#4d4d4d">{label}</text>
    </g>
  ));

function TrendChart() {
  const dots = SERIES.flatMap((s, i) => present(s.values).map(([d, v]) => ({ i, d, v })));
  // gender identity over transgender over biological sex unless listed in ON_TOP
  const rank = ({ i, d }) => (ON_TOP[d] === i ? 9 : [0, 2, 1][i]);
  dots.sort((a, b) => rank(a) - rank(b));

  return (
    <g>
      <text x="345" y="564" fontSize="39" fill="#fff">Articles about trans people in US + UK news media</text>
      <text x="345" y="612" fontSize="32" fill="#fff" xmlSpace="preserve">3443 headlines, 01/22 - 02/26 |  (53.43% of total dataset (N=6444)</text>
      <text transform="translate(289 983) rotate(-90)" textAnchor="middle" fontSize="32" fill="#fff">number of articles</text>
      <AxisY scale={lineY} />
      <AxisX y={1333} ticks={[[773, "Feb 01"], [1267, "Feb 15"], [1761, "Mar 01"]]} />
      {SERIES.map((s) => (
        <polyline
          key={s.name}
          points={present(s.values).map(([d, v]) => `${dayX(d)},${lineY(v)}`).join(" ")}
          fill="none"
          stroke={s.color}
          strokeWidth="3"
        />
      ))}
      {dots.map(({ i, d, v }) => (
        <circle key={`${i}-${d}`} cx={dayX(d)} cy={lineY(v)} r="6" fill={SERIES[i].color} />
      ))}
      <rect x="2013" y="633" width="51" height="700" fill="#262626" />
      <text transform="translate(2028 984) rotate(90)" textAnchor="middle" fontSize="26" fill="#e5e5e5">USA</text>

      <text x="2112" y="911" fontSize="32" fill="#fff">keyword</text>
      {SERIES.map((s, i) => (
        <g key={s.name}>
          <path d={`M2117 ${956 + i * 51}h40`} stroke={s.color} strokeWidth="3" />
          <circle cx="2137" cy={956 + i * 51} r="6" fill={s.color} />
          <text x="2178" y={966 + i * 51} fontSize="26" fill="#fff">{s.name}</text>
        </g>
      ))}
    </g>
  );
}

function Facet({ name, x, feb, values, colors, links }) {
  const pts = present(values);
  const px = (d) => feb + (d - 10) * 11.64;
  return (
    <g>
      <rect x={x} y="1472" width="550" height="50" fill="#262626" />
      <text x={x + 275} y="1507" textAnchor="middle" fontSize="26" fill="#e5e5e5">{name}</text>
      {links.map(([a, b, ink], i) => (
        <path key={i} d={`M${px(a)} ${bubbleY(values[a])}L${px(b)} ${bubbleY(values[b])}`} stroke={INK[ink]} strokeWidth="3" />
      ))}
      {pts.slice(1).map(([d, v], i) => {
        const [pd, pv] = pts[i];
        // links that touch a low count carry fewer topics and come out darker
        const faint = Math.min(v, pv) < 8;
        return (
          <path
            key={d}
            d={`M${px(pd)} ${bubbleY(pv)}L${px(d)} ${bubbleY(v)}`}
            stroke={faint ? "#27261e" : "#4b4b46"}
            strokeWidth="3"
          />
        );
      })}
      {pts.map(([d, v]) => <circle key={d} cx={px(d)} cy={bubbleY(v)} r={bubbleR(v)} fill={`#${colors[d]}`} />)}
      <AxisX y={3652} ticks={[[feb, "Feb 01"], [feb + 163, "Feb 15"], [feb + 326, "Mar 01"]]} />
    </g>
  );
}

function TopicChart() {
  return (
    <g>
      <text x="345" y="1449" fontSize="39" fill="#fff">Key topics in article excerpt, stratified by search term &amp; region</text>
      <text transform="translate(290 2587) rotate(-90)" textAnchor="middle" fontSize="32" fill="#fff">number of articles</text>
      <AxisY scale={bubbleY} />
      {FACETS.map((f) => <Facet key={f.name} {...f} />)}
      <rect x="2026" y="1522" width="51" height="2130" fill="#262626" />
      <text transform="translate(2041 2588) rotate(90)" textAnchor="middle" fontSize="26" fill="#e5e5e5">USA</text>

      <text x="2125" y="2314" fontSize="32" fill="#fff">topic</text>
      {TOPICS.map(([name, color, line], i) => {
        const y = 2358 + i * 50.6;
        return (
          <g key={name}>
            {color && <path d={`M2130 ${y}h40`} stroke={line} strokeWidth="3" />}
            {color && <circle cx="2151" cy={y} r="6" fill={color} />}
            <text x="2191" y={y + 10} fontSize="26" fill="#fff">{name}</text>
          </g>
        );
      })}
      <text x="2026" y="3742" textAnchor="end" fontSize="26" fill="#fff">
        updated 2023-03-07 00:01:50 | [ github.com/jessicakay/gayagenda ] | @jessdkant
      </text>
    </g>
  );
}

function PlotsPane() {
  return (
    <Pane>
      <Tabs items={["Files", "Plots", "Packages", "Help", "Viewer", "Presentation"]} active="Plots" />
      <Bar className="pt-1.5 pr-2.5 pl-[18px] text-[23px]">
        <ToolButton icon={<ArrowIcon color="#a9cbe4" />} />
        <ToolButton icon={<ArrowIcon right color="#6e8799" />} className="ml-6" />
        <Sep className="ml-3.5" />
        <ToolButton icon={<ZoomIcon />} label="Zoom" gap="ml-3" className="ml-4" />
        <Sep className="ml-5" />
        <ToolButton icon={<ExportIcon />} label="Export" caret className="ml-3" />
        <Sep className="ml-4" />
        <ToolButton icon={<DeletePlotIcon />} className="ml-3" />
        <Sep className="ml-4" />
        <ToolButton icon={<BroomIcon />} className="ml-3" />
        <ToolButton icon={<PublishIcon />} label="Publish" caret className="ml-auto" />
        <Sep className="ml-5" />
        <ToolButton icon={<RefreshIcon />} className="ml-3.5" />
      </Bar>
      <svg viewBox="249 518 2130 3247" className="h-auto w-full bg-black font-['Liberation_Sans',Arial,sans-serif]" role="img" aria-label="Article counts by keyword and topic">
        <TrendChart />
        <TopicChart />
      </svg>
    </Pane>
  );
}

export default function App() {
  return (
    <div className="flex min-h-screen flex-col bg-[#384c67] font-['Open_Sans','Noto_Sans',sans-serif] text-[22px] leading-7 text-white">
      <TitleBar />
      <MainToolbar />
      <main className="flex flex-1 gap-4 pt-[15px] pr-[19px] pb-[13px] pl-[18px]">
        <div className="flex w-[213px] shrink-0 flex-col gap-4">
          <SourcePane />
          <ConsolePane />
        </div>
        <div className="flex min-w-0 flex-1 flex-col gap-[15px]">
          <EnvironmentPane />
          <PlotsPane />
        </div>
      </main>
    </div>
  );
}
